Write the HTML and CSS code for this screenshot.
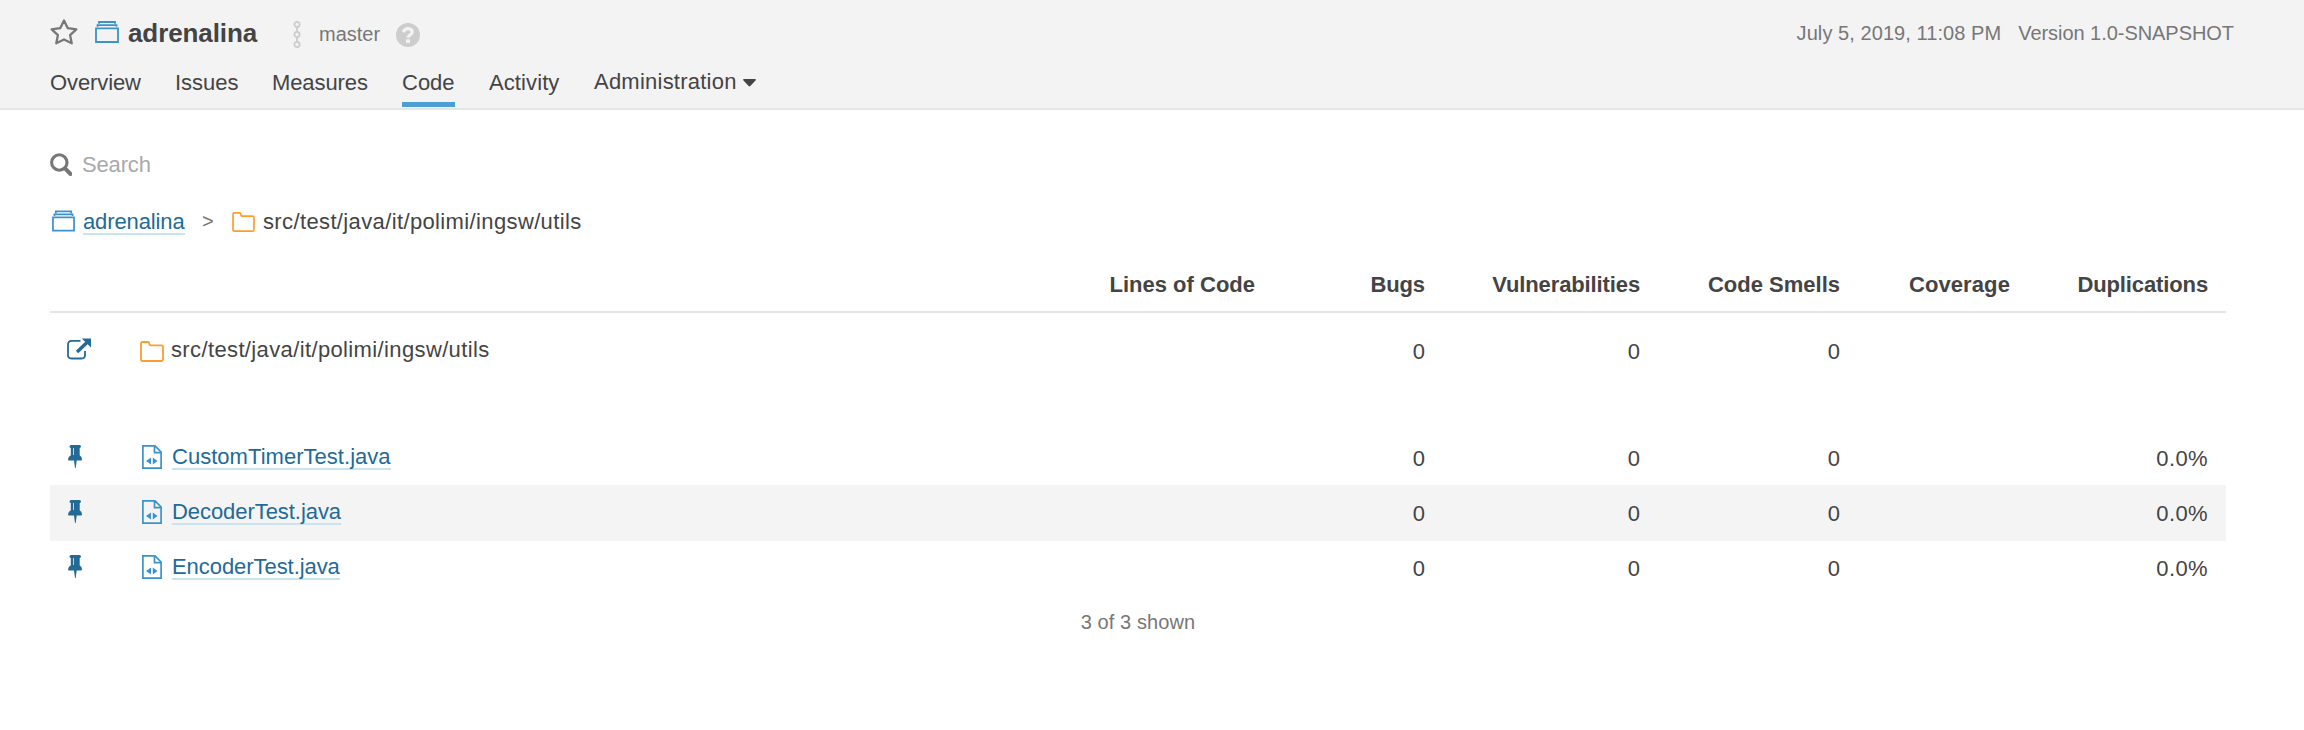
FILE: index.html
```html
<!DOCTYPE html>
<html lang="en">
<head>
<meta charset="utf-8">
<title>adrenalina - Code</title>
<link rel="stylesheet" href="styles.css">
</head>
<body>
<svg class="defs" width="0" height="0">
  <symbol id="project" viewBox="0 0 24 22"><path fill="none" stroke="currentColor" stroke-width="1.8" d="M1 7.300H23V21H1ZM2.500 5.800V4.200H21.500V5.800M4 2.800V1H20V2.800"/></symbol>
  <symbol id="folder" viewBox="0 0 24 21"><path fill="none" stroke="currentColor" stroke-width="1.800" d="M2.500 1H7.800Q9.300 1 9.300 2.500Q9.300 4.300 11 4.300H21.500Q23 4.300 23 5.800V18.500Q23 20 21.500 20H2.500Q1 20 1 18.500V2.500Q1 1 2.500 1Z"/></symbol>
  <symbol id="file" viewBox="0 0 20 24"><path fill="none" stroke="currentColor" stroke-width="1.700" d="M.900 .900H13L19.100 7V23.100H.900ZM12.500 1V7.700H19"/><path fill="currentColor" d="M9 12.500V19.500L4 16ZM10.800 12.500V19.500L15.500 16Z"/></symbol>
  <symbol id="pin" viewBox="0 0 14 23"><path fill="currentColor" d="M3 0H11.500Q13 0 13 1.500Q13 2.700 11.700 2.900V10.300Q14 11.700 14 14.500Q14 15.500 13 15.500H8.700L7.700 23H7L6 15.500H1Q0 15.500 0 14.500Q.200 11.700 2.800 10.300V2.900Q1.500 2.700 1.500 1.500Q1.500 0 3 0Z"/><path stroke="#bcd4e3" stroke-width="1" d="M5.500 3V10"/></symbol>
</svg>
<header class="header">
  <div class="title-row">
    <svg class="star" viewBox="0 0 28 26"><path fill="none" stroke="currentColor" stroke-width="2.300" stroke-linejoin="round" d="M14 1.500L17.800 9.200L26.300 10.300L20.100 16.100L21.700 24.300L14 20.500L6.300 24.300L7.900 16.100L1.700 10.300L10.200 9.200Z"/></svg>
    <svg class="project-icon"><use href="#project"/></svg>
    <h1 class="project-name">adrenalina</h1>
    <svg class="branch-icon" viewBox="0 0 8 27"><g fill="none" stroke="currentColor" stroke-width="1.800"><circle cx="4" cy="3.500" r="2.600"/><circle cx="4" cy="13.500" r="2.600"/><circle cx="4" cy="23.500" r="2.600"/><path d="M4 6V11M4 16V21"/></g></svg>
    <span class="branch">master</span>
    <svg class="help" viewBox="0 0 24 24"><circle cx="12" cy="12" r="12" fill="currentColor"/><path fill="none" stroke="#f3f3f3" stroke-width="3.200" d="M7.300 9.200Q8.700 5.700 12 5.700Q16.200 5.900 16.200 9Q16.200 10.700 14.200 11.800Q12 13 12 14.800"/><rect x="10" y="16.300" width="4" height="3.500" fill="#f3f3f3"/></svg>
    <div class="meta"><span class="date">July 5, 2019, 11:08 PM</span><span class="version">Version 1.0-SNAPSHOT</span></div>
  </div>
  <nav class="tabs">
    <a class="tab overview">Overview</a>
    <a class="tab issues">Issues</a>
    <a class="tab measures">Measures</a>
    <a class="tab code active">Code</a>
    <a class="tab activity">Activity</a>
    <a class="tab administration">Administration<svg class="caret" viewBox="0 0 13 8"><path fill="currentColor" d="M1 0H12Q13.500 .300 12.500 1.500L7.300 7Q6.500 7.900 5.700 7L.500 1.500Q-.500 .300 1 0Z"/></svg></a>
  </nav>
</header>
<main class="page">
  <div class="search">
    <svg class="search-icon" viewBox="0 0 22 23"><g fill="none" stroke="currentColor"><circle cx="9.300" cy="9.500" r="7.700" stroke-width="3.100"/><path d="M15 15.300L20.500 21" stroke-width="4" stroke-linecap="round"/></g></svg>
    <span class="placeholder">Search</span>
  </div>
  <div class="crumbs">
    <svg class="crumb-project"><use href="#project"/></svg>
    <a class="link crumb-link">adrenalina</a>
    <span class="separator">&gt;</span>
    <svg class="crumb-folder"><use href="#folder"/></svg>
    <span class="path">src/test/java/it/polimi/ingsw/utils</span>
  </div>
  <section class="table">
    <div class="row head"><span></span><span></span><b class="loc">Lines of Code</b><b class="bugs">Bugs</b><b class="vuln">Vulnerabilities</b><b class="smells">Code Smells</b><b class="coverage">Coverage</b><b class="dup">Duplications</b></div>
    <div class="row base">
      <span class="action"><svg class="open" viewBox="0 0 24 22"><path fill="none" stroke="currentColor" stroke-width="1.800" d="M13.500 2.900H4.500Q1 2.900 1 6.400V17Q1 20.500 4.500 20.500H14.500Q18 20.500 18 17V13"/><path fill="none" stroke="currentColor" stroke-width="3.400" d="M10 14L20 4.500"/><path fill="currentColor" d="M14.800 .600H24V9.500Z"/></svg></span>
      <span class="name"><svg class="folder"><use href="#folder"/></svg><span class="path">src/test/java/it/polimi/ingsw/utils</span></span>
      <span></span><span class="num">0</span><span class="num">0</span><span class="num">0</span><span></span><span></span>
    </div>
    <div class="row">
      <span class="action"><svg class="pin"><use href="#pin"/></svg></span>
      <span class="name"><svg class="file"><use href="#file"/></svg><a class="link custom">CustomTimerTest.java</a></span>
      <span></span><span class="num">0</span><span class="num">0</span><span class="num">0</span><span></span><span class="num percent">0.0%</span>
    </div>
    <div class="row striped">
      <span class="action"><svg class="pin"><use href="#pin"/></svg></span>
      <span class="name"><svg class="file"><use href="#file"/></svg><a class="link decoder">DecoderTest.java</a></span>
      <span></span><span class="num">0</span><span class="num">0</span><span class="num">0</span><span></span><span class="num percent">0.0%</span>
    </div>
    <div class="row">
      <span class="action"><svg class="pin"><use href="#pin"/></svg></span>
      <span class="name"><svg class="file"><use href="#file"/></svg><a class="link encoder">EncoderTest.java</a></span>
      <span></span><span class="num">0</span><span class="num">0</span><span class="num">0</span><span></span><span class="num percent">0.0%</span>
    </div>
  </section>
  <footer class="shown">3 of 3 shown</footer>
</main>
</body>
</html>
```
FILE: styles.css
```css
* { box-sizing: border-box; }
body { margin: 0; background: #fff; color: #444; font: 22px/33px "Liberation Sans", Arial, sans-serif; }
svg { display: block; flex: none; }
.defs { position: absolute; }
span, a, h1, b { white-space: nowrap; }

.header { height: 110px; padding: 13px 70px 0 50px; background: #f3f3f3; border-bottom: 2px solid #e6e6e6; }
.title-row { display: flex; align-items: flex-start; height: 53px; line-height: 40px; color: #777; }
.star { width: 28px; height: 26px; margin: 6px 17px 0 0; color: #777; }
.project-icon { width: 24px; height: 22px; margin: 8px 9px 0 0; color: #3c92ca; }
.project-name { width: 130px; margin: 0; font-size: 26px; line-height: 40px; letter-spacing: -.1px; color: #444; }
.branch-icon { width: 8px; height: 27px; margin: 8px 17px 0 35px; color: #cdcdcd; }
.branch { width: 64px; padding: 1px 0 0 1px; font-size: 20px; }
.help { width: 24px; height: 24px; margin: 10px 0 0 14px; color: #cdcdcd; }
.meta { display: flex; gap: 17px; margin-left: auto; font-size: 20px; }
.version { letter-spacing: -.05px; }
.date { letter-spacing: .07px; }

.tabs { display: flex; align-items: flex-start; }
.tab { height: 41px; flex: none; }
.overview { width: 125px; letter-spacing: -.1px; }
.issues { width: 97px; }
.measures { width: 130px; letter-spacing: -.1px; }
.code { width: 53px; }
.active { border-bottom: 5px solid #4b9fd5; }
.activity { margin-left: 34px; width: 105px; letter-spacing: .1px; }
.administration { display: flex; line-height: 31px; letter-spacing: .23px; }
.caret { width: 13px; height: 8px; margin: 13px 0 0 6px; }

.page { padding: 38px 78px 0 50px; }
.search { display: flex; height: 57px; color: #777; }
.search-icon { width: 22px; height: 23px; margin: 5px 10px 0 0; }
.placeholder { letter-spacing: -.15px; color: #a9a9a9; }
.crumbs { display: flex; height: 53px; }
.crumb-project { width: 23px; height: 22px; margin: 5px 8px 0 2px; color: #3c92ca; }
.link { height: 30px; color: #236a97; border-bottom: 2px solid #cae3f2; }
.crumb-link { width: 102px; letter-spacing: -.12px; }
.separator { width: 30px; margin-left: 17px; font-size: 20px; color: #777; }
.crumb-folder { width: 23px; height: 20px; margin: 7px 8px 0 0; color: #fe9d2e; }
.path { letter-spacing: .37px; }

.row { display: grid; grid-template-columns: 90px 1fr 219px 170px 215px 200px 170px 198px; height: 55px; line-height: 53px; }
.head { border-bottom: 2px solid #e6e6e6; }
.head b, .num { padding-right: 18px; text-align: right; }
.bugs, .vuln, .dup { letter-spacing: -.12px; }
.coverage { letter-spacing: .1px; }
.num { line-height: 57px; }
.percent { letter-spacing: .4px; }
.base { height: 117px; padding-top: 10px; }
.striped { height: 56px; margin-bottom: -1px; background: #f4f4f4; }
.action { color: #236a97; }
.open { width: 24px; height: 22px; margin: 15px 0 0 17px; }
.pin { width: 14px; height: 23px; margin: 15px 0 0 18px; }
.name { display: flex; align-items: flex-start; }
.folder { width: 24px; height: 21px; margin: 18px 7px 0 0; color: #fe9d2e; }
.file { width: 20px; height: 24px; margin: 15px 10px 0 2px; color: #3c92ca; }
.name .link { height: 40px; }
.custom { letter-spacing: .03px; }
.decoder, .encoder { letter-spacing: -.06px; }
.shown { text-align: center; font-size: 20px; line-height: 54px; letter-spacing: .1px; color: #777; }
```
